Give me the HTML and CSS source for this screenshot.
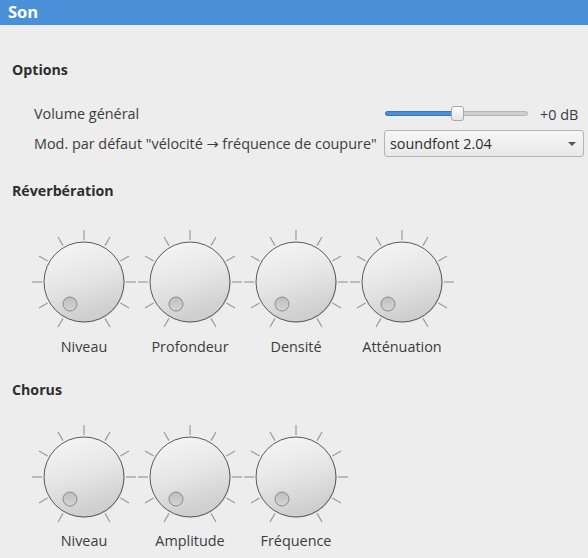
FILE: index.html
```html
<!DOCTYPE html>
<html lang="fr">
<head>
<meta charset="utf-8">
<link rel="stylesheet" href="styles.css">
</head>
<body>
<svg class="defs" width="0" height="0" aria-hidden="true">
  <defs>
    <linearGradient id="kfill" x1="0" y1="0" x2="0.3" y2="1">
      <stop offset="0" stop-color="#f7f7f7"/>
      <stop offset="0.55" stop-color="#e6e6e6"/>
      <stop offset="1" stop-color="#cfcfcf"/>
    </linearGradient>
    <linearGradient id="dfill" x1="0" y1="0" x2="0" y2="1">
      <stop offset="0" stop-color="#bdbdbd"/>
      <stop offset="1" stop-color="#d6d6d6"/>
    </linearGradient>
    <symbol id="knob" viewBox="0 0 106 106">
      <g stroke="#9a9a9a" stroke-width="1.2">
        <line x1="32" y1="89.4" x2="27" y2="98"/>
        <line x1="16.6" y1="74" x2="8" y2="79"/>
        <line x1="11" y1="53" x2="1" y2="53"/>
        <line x1="16.6" y1="32" x2="8" y2="27"/>
        <line x1="32" y1="16.6" x2="27" y2="8"/>
        <line x1="53" y1="11" x2="53" y2="1"/>
        <line x1="74" y1="16.6" x2="79" y2="8"/>
        <line x1="89.4" y1="32" x2="98" y2="27"/>
        <line x1="95" y1="53" x2="105" y2="53"/>
        <line x1="89.4" y1="74" x2="98" y2="79"/>
        <line x1="74" y1="89.4" x2="79" y2="98"/>
      </g>
      <circle cx="53.6" cy="53.6" r="40" fill="#bdbdbd"/>
      <circle cx="53" cy="53" r="40" fill="url(#kfill)" stroke="#5a5a5a" stroke-width="1"/>
      <circle cx="39" cy="75" r="7" fill="url(#dfill)" stroke="#8a8a8a" stroke-width="1"/>
    </symbol>
  </defs>
</svg>

<div class="titlebar">Son</div>

<div class="content">
  <h2 class="heading">Options</h2>
  <div class="form">
    <div class="label">Volume général</div>
    <div class="control slider-row">
      <div class="slider">
        <div class="track"><div class="fill" style="width: 68px"></div></div>
        <div class="handle" style="left: 66px"></div>
      </div>
      <span class="value">+0 dB</span>
    </div>
    <div class="label">Mod. par défaut "vélocité → fréquence de coupure"</div>
    <div class="control">
      <div class="combo">
        <span>soundfont 2.04</span>
        <span class="arrow"></span>
      </div>
    </div>
  </div>

  <h2 class="heading heading-reverb">Réverbération</h2>
  <div class="knobs">
    <div class="knob-cell"><svg class="knob"><use href="#knob"/></svg><div class="knob-label">Niveau</div></div>
    <div class="knob-cell"><svg class="knob"><use href="#knob"/></svg><div class="knob-label">Profondeur</div></div>
    <div class="knob-cell"><svg class="knob"><use href="#knob"/></svg><div class="knob-label">Densité</div></div>
    <div class="knob-cell"><svg class="knob"><use href="#knob"/></svg><div class="knob-label">Atténuation</div></div>
  </div>

  <h2 class="heading heading-chorus">Chorus</h2>
  <div class="knobs knobs-chorus">
    <div class="knob-cell"><svg class="knob"><use href="#knob"/></svg><div class="knob-label">Niveau</div></div>
    <div class="knob-cell"><svg class="knob"><use href="#knob"/></svg><div class="knob-label">Amplitude</div></div>
    <div class="knob-cell"><svg class="knob"><use href="#knob"/></svg><div class="knob-label">Fréquence</div></div>
  </div>
</div>
</body>
</html>
```
FILE: styles.css
```css
html, body {
  margin: 0;
  padding: 0;
  background: #ededed;
  width: 588px;
  height: 558px;
  overflow: hidden;
}
body {
  font-family: "Open Sans", "Noto Sans", "DejaVu Sans", sans-serif;
  font-size: 14.4px;
  color: #3c3c3c;
}
.defs {
  position: absolute;
  width: 0;
  height: 0;
}
.titlebar {
  height: 25px;
  line-height: 24px;
  background: #4a90d9;
  color: #ffffff;
  font-weight: 700;
  font-size: 16.5px;
  padding-left: 8px;
}
.content {
  padding-left: 12px;
}
.heading {
  margin: 36px 0 0 0;
  font-size: 14.2px;
  line-height: 18px;
  font-weight: 700;
  color: #2e2e2e;
}
.heading-reverb {
  margin-top: 25px;
}
.heading-chorus {
  margin-top: 25px;
}
.form {
  margin: 23px 0 0 22px;
  display: grid;
  grid-template-columns: 350px 200px;
  row-gap: 4px;
  align-items: center;
}
.label {
  line-height: 18px;
}
.slider-row {
  height: 24px;
  display: flex;
  align-items: center;
}
.slider {
  position: relative;
  width: 143px;
  height: 14px;
  margin-left: 1px;
}
.track {
  position: absolute;
  left: 0;
  right: 0;
  top: 4px;
  height: 3px;
  border: 1px solid #b6b6b6;
  border-radius: 3px;
  background: #cfcfcf;
}
.fill {
  height: 100%;
  background: #4a90d9;
  border-radius: 3px 0 0 3px;
  margin: -1px 0 0 -1px;
  border: 1px solid #3a78bb;
}
.handle {
  position: absolute;
  top: -1px;
  width: 11px;
  height: 13px;
  border: 1px solid #a8a8a8;
  border-radius: 3px;
  background: linear-gradient(#fcfcfc, #e4e4e4);
}
.value {
  margin-left: 12px;
}
.combo {
  box-sizing: border-box;
  width: 200px;
  height: 27px;
  border: 1px solid #b4b4b4;
  border-radius: 3px;
  background: linear-gradient(#f6f6f6, #e9e9e9);
  display: flex;
  align-items: center;
  justify-content: space-between;
  padding: 0 7px 0 5px;
  color: #2e2e2e;
}
.arrow {
  width: 0;
  height: 0;
  border-left: 4px solid transparent;
  border-right: 4px solid transparent;
  border-top: 4px solid #555555;
}
.knobs {
  margin: 29px 0 0 19px;
  display: flex;
}
.knobs-chorus {
  margin-top: 25px;
}
.knob-cell {
  width: 106px;
  display: flex;
  flex-direction: column;
  align-items: center;
}
.knob {
  width: 106px;
  height: 106px;
  display: block;
}
.knob-label {
  margin-top: 3px;
  line-height: 18px;
}
.knobs-chorus .knob-label {
  margin-top: 2px;
}
```
